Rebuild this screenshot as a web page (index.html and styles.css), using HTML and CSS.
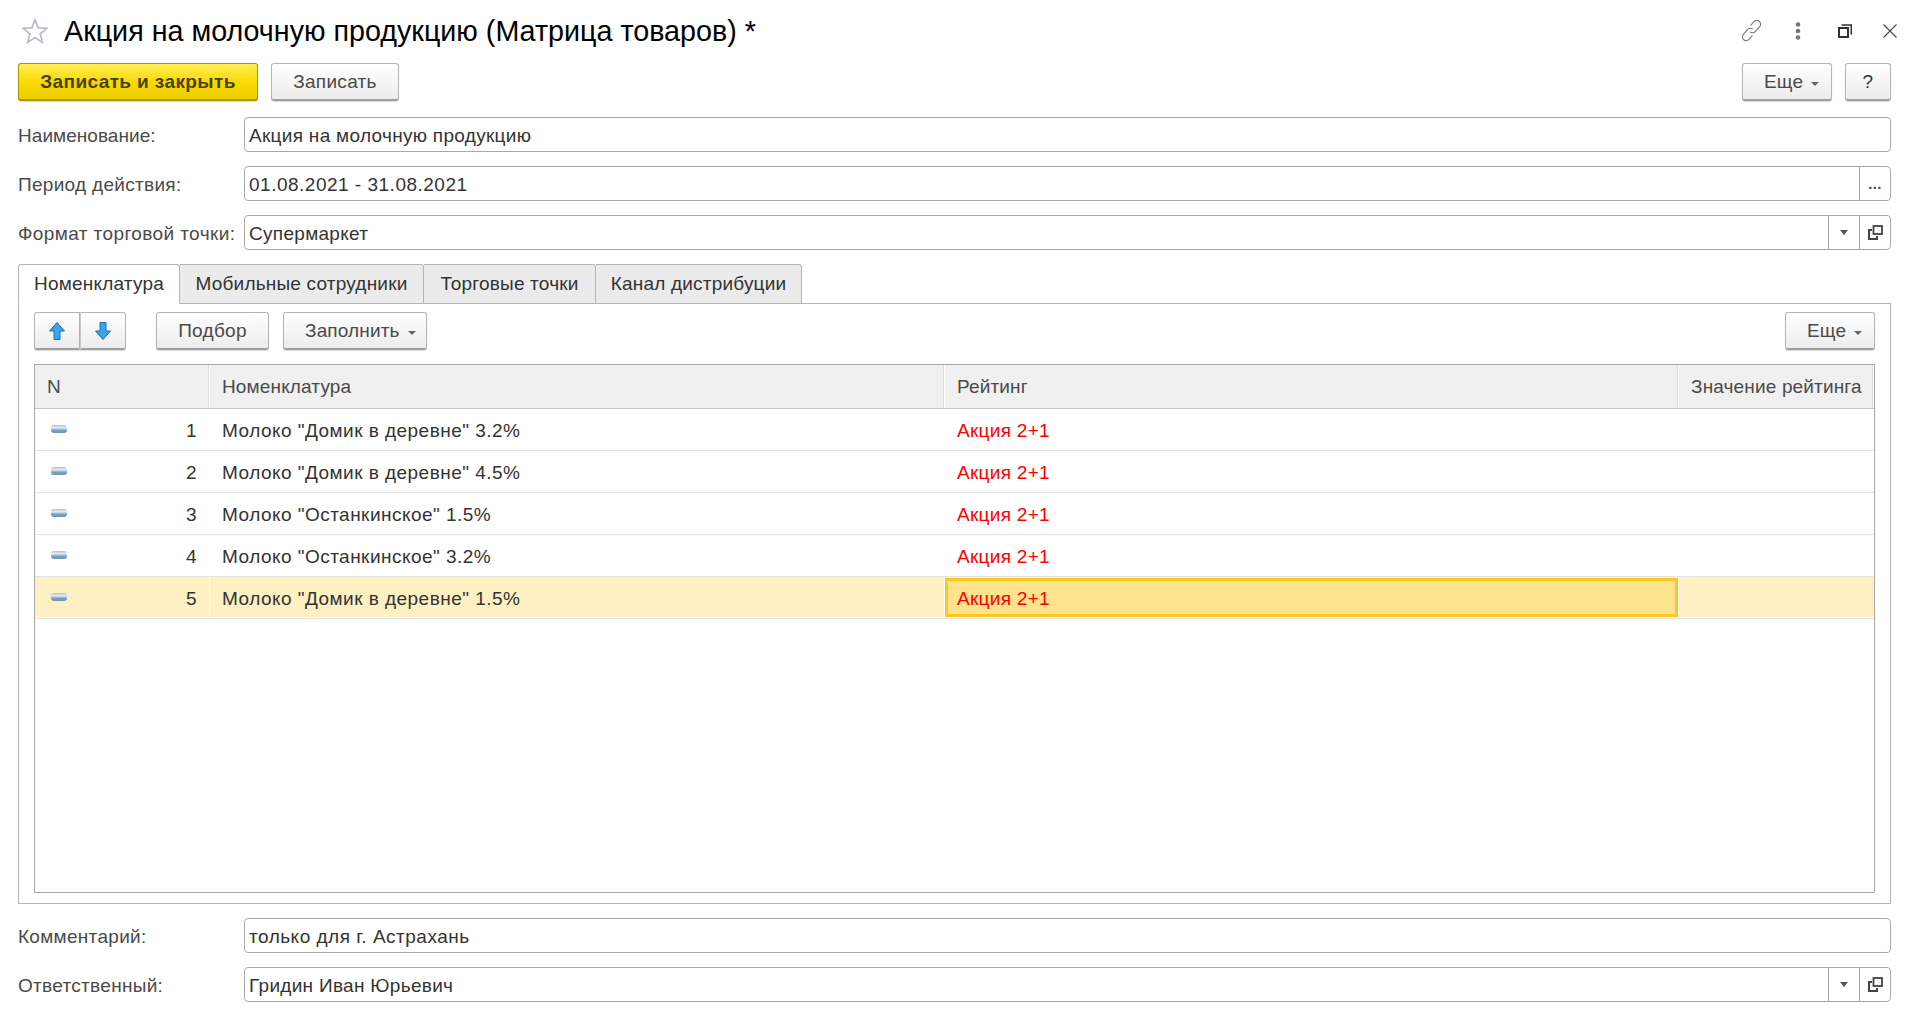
FILE: index.html
```html
<!DOCTYPE html>
<html lang="ru">
<head>
<meta charset="utf-8">
<title>Акция на молочную продукцию</title>
<link rel="stylesheet" href="styles.css">
</head>
<body>
<div class="page">
  <header class="titlebar">
    <svg class="star" width="26" height="26" viewBox="1 1 24 24"><path d="M13 2.500l2.900 7.600 8.100.4-6.300 5.100 2.100 7.900-6.800-4.500-6.800 4.500 2.100-7.900-6.300-5.100 8.100-.4z" fill="#fff" stroke="#b4bbc5" stroke-width="1.500"/></svg>
    <h1 class="title">Акция на молочную продукцию (Матрица товаров) *</h1>
    <div class="win-icons">
      <svg class="ic-link" width="23" height="23" viewBox="0 0 23 23" fill="none" stroke="#777" stroke-width="1.100"><path d="M10.500 6.500l3.300-3.700a3.800 3.800 0 0 1 5.900 4.800l-4.200 4.700a3.800 3.800 0 0 1-5.400.5"/><path d="M12.500 16.500l-3.300 3.700a3.800 3.800 0 0 1-5.900-4.800l4.200-4.700a3.800 3.800 0 0 1 5.400-.5"/></svg>
      <svg class="ic-dots" width="8" height="18" viewBox="0 0 8 18" fill="#777"><circle cx="4" cy="2.500" r="2.300"/><circle cx="4" cy="9" r="2.300"/><circle cx="4" cy="15.500" r="2.300"/></svg>
      <svg class="ic-restore" width="14" height="14" viewBox="0 0 14 14" fill="none" stroke="#333" stroke-width="1.500"><rect x="1" y="4" width="9" height="9" stroke-width="2"/><path d="M3.500 1h9.750v9.500"/></svg>
      <svg class="ic-close" width="14" height="14" viewBox="0 0 14 14" stroke="#444" stroke-width="1.100"><path d="M.5.500l13 13M13.500.5l-13 13"/></svg>
    </div>
  </header>

  <div class="toolbar">
    <button class="btn btn-primary">Записать и закрыть</button>
    <button class="btn btn-save">Записать</button>
    <span class="spacer"></span>
    <button class="btn btn-more drop">Еще<i class="caret"></i></button>
    <button class="btn btn-help">?</button>
  </div>

  <div class="form-row">
    <label class="label tight">Наименование:</label>
    <div class="field"><span class="value">Акция на молочную продукцию</span></div>
  </div>
  <div class="form-row">
    <label class="label">Период действия:</label>
    <div class="field"><span class="value wide">01.08.2021 - 31.08.2021</span><span class="fbtn dots">...</span></div>
  </div>
  <div class="form-row">
    <label class="label loose">Формат торговой точки:</label>
    <div class="field"><span class="value">Супермаркет</span><span class="fbtn"><i class="tri"></i></span><span class="fbtn"><svg class="open" width="15" height="15" viewBox="0 0 15 15" fill="none" stroke="#444" stroke-width="2"><rect x="5.500" y="1" width="8.500" height="8" stroke-width="1.800"/><path d="M4 5H1v9h8v-3"/></svg></span></div>
  </div>

  <div class="tabs">
    <div class="tab active">Номенклатура</div>
    <div class="tab w2">Мобильные сотрудники</div>
    <div class="tab w3">Торговые точки</div>
    <div class="tab w4">Канал дистрибуции</div>
  </div>
  <section class="panel">
    <div class="panel-tools">
      <div class="btn-group">
        <button class="btn btn-arrow"><svg width="16" height="18" viewBox="1 1 16 18"><path d="M9 1.500L16.500 10H12v8.500H6V10H1.500z" fill="#3aa6ea" stroke="#1a6fa8"/></svg></button>
        <button class="btn btn-arrow"><svg width="16" height="18" viewBox="1 1 16 18"><path d="M9 18.500L1.500 10H6V1.500h6V10h4.500z" fill="#3aa6ea" stroke="#1a6fa8"/></svg></button>
      </div>
      <button class="btn btn-pick">Подбор</button>
      <button class="btn btn-fill drop">Заполнить<i class="caret"></i></button>
      <span class="spacer"></span>
      <button class="btn btn-more2 drop">Еще<i class="caret"></i></button>
    </div>
    <div class="grid">
      <div class="row head">
        <div class="cell">N</div><div class="cell">Номенклатура</div><div class="cell">Рейтинг</div><div class="cell">Значение рейтинга</div>
      </div>
      <div class="row">
        <div class="cell num"><i class="pill"></i>1</div><div class="cell">Молоко "Домик в деревне" 3.2%</div><div class="cell red">Акция 2+1</div><div class="cell"></div>
      </div>
      <div class="row">
        <div class="cell num"><i class="pill"></i>2</div><div class="cell">Молоко "Домик в деревне" 4.5%</div><div class="cell red">Акция 2+1</div><div class="cell"></div>
      </div>
      <div class="row">
        <div class="cell num"><i class="pill"></i>3</div><div class="cell">Молоко "Останкинское" 1.5%</div><div class="cell red">Акция 2+1</div><div class="cell"></div>
      </div>
      <div class="row">
        <div class="cell num"><i class="pill"></i>4</div><div class="cell">Молоко "Останкинское" 3.2%</div><div class="cell red">Акция 2+1</div><div class="cell"></div>
      </div>
      <div class="row selected">
        <div class="cell num"><i class="pill"></i>5</div><div class="cell">Молоко "Домик в деревне" 1.5%</div><div class="cell red current">Акция 2+1</div><div class="cell"></div>
      </div>
    </div>
  </section>

  <div class="form-row comment">
    <label class="label">Комментарий:</label>
    <div class="field"><span class="value wide">только для г. Астрахань</span></div>
  </div>
  <div class="form-row">
    <label class="label">Ответственный:</label>
    <div class="field"><span class="value">Гридин Иван Юрьевич</span><span class="fbtn"><i class="tri"></i></span><span class="fbtn"><svg class="open" width="15" height="15" viewBox="0 0 15 15" fill="none" stroke="#444" stroke-width="2"><rect x="5.500" y="1" width="8.500" height="8" stroke-width="1.800"/><path d="M4 5H1v9h8v-3"/></svg></span></div>
  </div>
</div>
</body>
</html>
```
FILE: styles.css
```css
* { box-sizing: border-box; }
html, body { margin: 0; height: 100%; background: #fff; }
body { overflow: hidden; font: 19px/1 "Liberation Sans", Arial, sans-serif; letter-spacing: .3px; color: #333; }
.page { display: flex; flex-direction: column; padding: 0 29px 0 18px; height: 1019px; }

.titlebar { display: flex; align-items: center; height: 63px; flex: none; }
.star { margin: 0 16px 2px 4px; flex: none; }
.title { margin: 0; font-size: 28.7px; font-weight: 400; letter-spacing: 0; color: #000; white-space: nowrap; }
.win-icons { margin-left: auto; display: flex; align-items: center; padding-bottom: 2px; }
.ic-link { margin-right: 31px; }
.ic-dots { margin-right: 36px; }
.ic-restore { margin-right: 31px; }
.ic-close { margin-right: -6px; }

.toolbar { display: flex; height: 38px; flex: none; margin-bottom: 16px; }
.spacer { flex: 1; }
.btn { height: 38px; font: inherit; letter-spacing: inherit; color: #4a4a4a; border: 1px solid #b4b4b4; border-bottom: 2px solid #a0a0a0; border-radius: 3px; background: linear-gradient(#fff, #ececec); box-shadow: 0 1px 1px rgba(0,0,0,.15); padding: 0; flex: none; }
.btn-primary { width: 240px; background: linear-gradient(#ffee55, #f8d800 55%, #eccf00); border-color: #ab9400; color: #4a4000; font-weight: 700; letter-spacing: .4px; }
.btn-save { width: 128px; margin-left: 13px; }
.btn-more { width: 90px; }
.btn-help { width: 46px; margin-left: 13px; color: #333; }
.drop { text-align: left; padding-left: 21px; letter-spacing: .15px; }
.caret { display: inline-block; margin-left: 8px; vertical-align: 2px; border: 4px solid transparent; border-top-color: #666; border-bottom-width: 0; }

.form-row { display: flex; align-items: center; height: 35px; margin-bottom: 14px; flex: none; }
.label { width: 226px; flex: none; padding-top: 2px; color: #4a4a4a; white-space: nowrap; }
.tight { letter-spacing: .05px; }
.loose { letter-spacing: .4px; }
.field { flex: 1; display: flex; align-items: stretch; height: 35px; border: 1px solid #a8a8a8; border-radius: 4px; background: #fff; }
.value { flex: 1; align-self: center; padding: 2px 0 0 4px; }
.wide { letter-spacing: .5px; }
.fbtn { width: 31px; flex: none; display: flex; align-items: center; justify-content: center; border-left: 1px solid #a8a8a8; color: #444; }
.dots { font-weight: 700; font-size: 15px; align-items: flex-end; padding-bottom: 9px; }
.tri { border: 4px solid transparent; border-top: 5px solid #555; border-bottom-width: 0; }

.tabs { display: flex; height: 40px; flex: none; position: relative; z-index: 1; }
.tab { height: 40px; padding-top: 9px; text-align: center; letter-spacing: .2px; color: #333; background: #ebebeb; border: 1px solid #b4b4b4; border-left: 0; border-radius: 0 3px 0 0; }
.tab.active { width: 162px; background: #fff; border-left: 1px solid #b4b4b4; border-bottom-color: #fff; border-radius: 3px 3px 0 0; }
.w2 { width: 244px; }
.w3 { width: 172px; }
.w4 { width: 206px; }

.panel { display: flex; flex-direction: column; height: 601px; flex: none; margin-top: -1px; padding: 8px 15px 10px; border: 1px solid #b4b4b4; }
.panel-tools { display: flex; height: 38px; flex: none; margin-bottom: 14px; }
.btn-group { display: flex; }
.btn-arrow { width: 46px; display: flex; align-items: center; justify-content: center; border-radius: 3px 0 0 3px; }
.btn-arrow + .btn-arrow { border-left: 1px solid #c8c8c8; border-radius: 0 3px 3px 0; }
.btn-pick { width: 113px; margin-left: 30px; }
.btn-fill { width: 144px; margin-left: 14px; }
.btn-more2 { width: 90px; }

.grid { flex: 1; border: 1px solid #a8a8a8; }
.row { display: grid; grid-template-columns: 175px 735px 734px 1fr; height: 42px; border-bottom: 1px solid #e4e4e4; letter-spacing: .47px; }
.row.head { height: 44px; background: #f0f0f0; border-bottom: 1px solid #c8c8c8; color: #4a4a4a; letter-spacing: .15px; }
.cell { display: flex; align-items: center; padding: 2px 12px 0; border-right: 1px solid transparent; white-space: nowrap; min-width: 0; }
.head .cell { padding-top: 0; border-right-color: #fff; box-shadow: inset -1px 0 0 #ddd; }
.num { justify-content: flex-end; position: relative; }
.pill { position: absolute; left: 16px; top: 16px; width: 16px; height: 8px; border-radius: 3px; background: linear-gradient(#a9c1d3, #e5edf3 35%, #7ea2bd 65%, #6d94b1); }
.red { color: #f00; letter-spacing: .3px; }
.selected { background: #fdf1c4; border-bottom-color: #e4e4e4; box-shadow: inset 0 -1px 0 #fff; }
.selected .cell { border-right-color: #fff; }
.selected .cell:last-child { border-right-color: transparent; }
.selected .current { background: #fde38c; border: 3px solid #fcc820; padding: 2px 9px 0; margin: 1px 1px 1px 0; box-shadow: 1px 0 0 #fff; }
.comment { margin-top: 14px; }
```
